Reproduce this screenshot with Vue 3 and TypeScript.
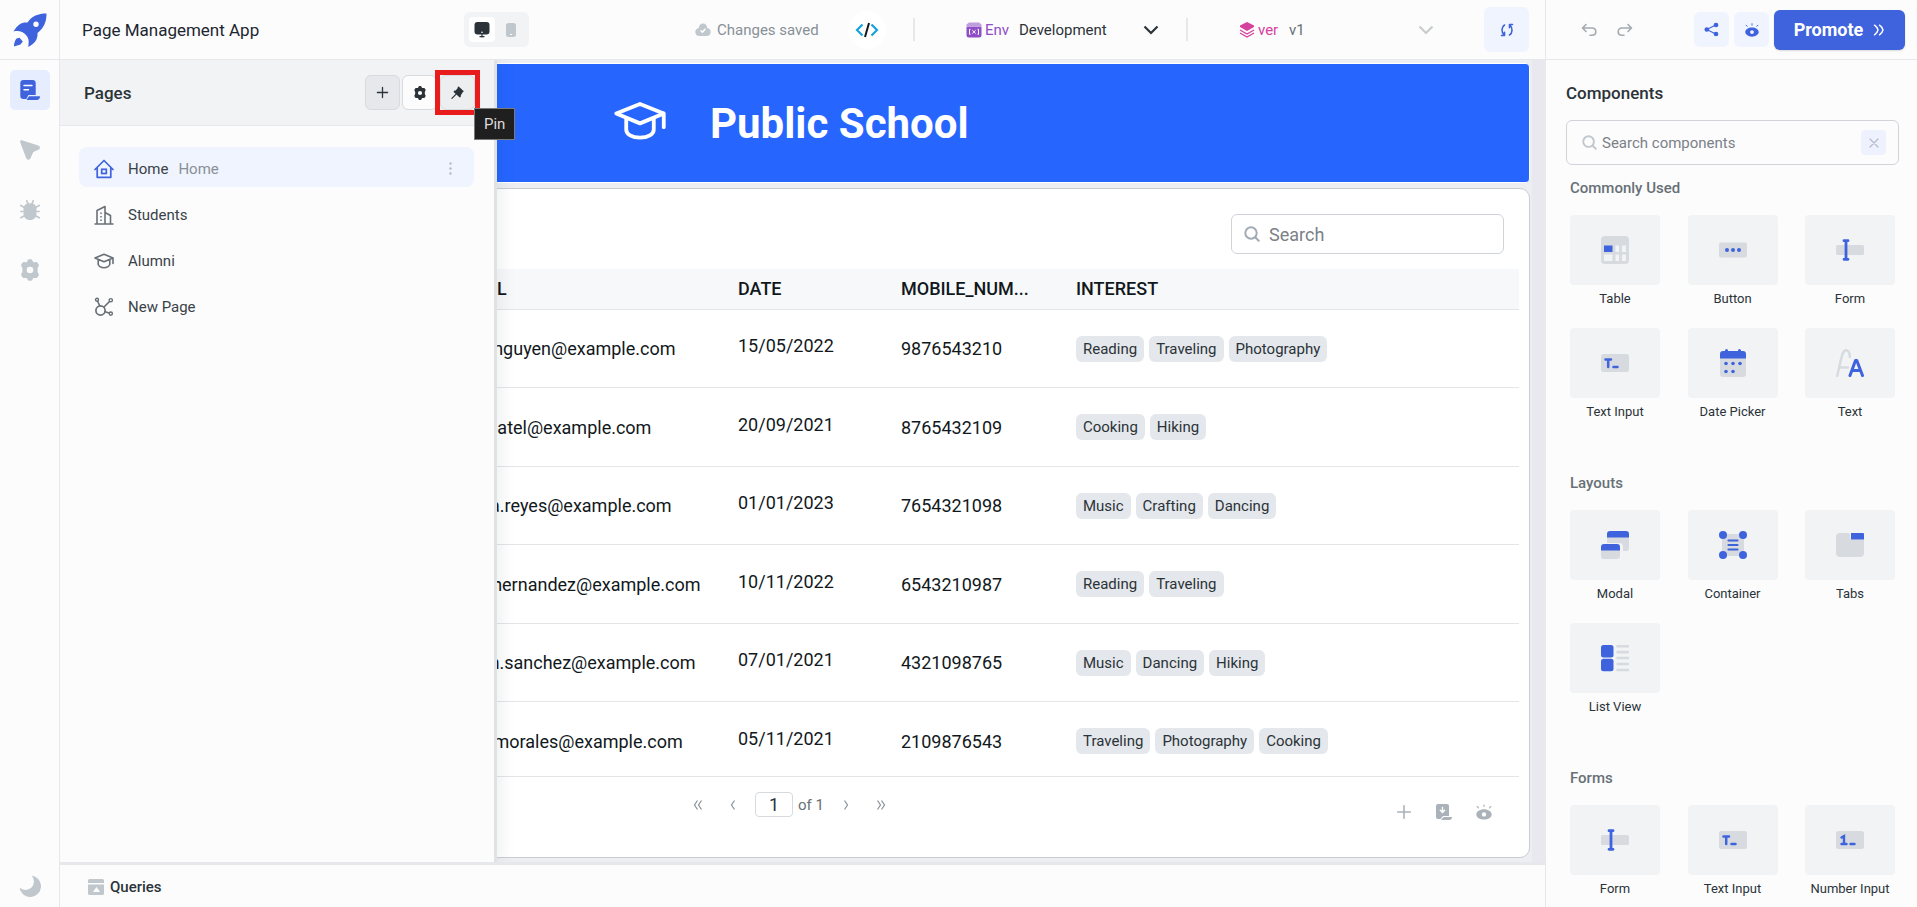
<script setup lang="ts">
import { ref } from 'vue'

interface PageItem { name: string; icon: string; home?: boolean }
interface Student { email: string; date: string; mobile: string; interests: string[] }
interface Widget { name: string; icon: string }
interface WidgetGroup { title: string; items: Widget[] }

const pages: PageItem[] = [
  { name: 'Home', icon: 'i-home', home: true },
  { name: 'Students', icon: 'i-building' },
  { name: 'Alumni', icon: 'i-cap-small' },
  { name: 'New Page', icon: 'i-nodes' },
]

const students: Student[] = [
  { email: 'john.nguyen@example.com', date: '15/05/2022', mobile: '9876543210', interests: ['Reading', 'Traveling', 'Photography'] },
  { email: 'anil.patel@example.com', date: '20/09/2021', mobile: '8765432109', interests: ['Cooking', 'Hiking'] },
  { email: 'maria.reyes@example.com', date: '01/01/2023', mobile: '7654321098', interests: ['Music', 'Crafting', 'Dancing'] },
  { email: 'jose.hernandez@example.com', date: '10/11/2022', mobile: '6543210987', interests: ['Reading', 'Traveling'] },
  { email: 'adam.sanchez@example.com', date: '07/01/2021', mobile: '4321098765', interests: ['Music', 'Dancing', 'Hiking'] },
  { email: 'cara.morales@example.com', date: '05/11/2021', mobile: '2109876543', interests: ['Traveling', 'Photography', 'Cooking'] },
]

const groups: WidgetGroup[] = [
  {
    title: 'Commonly Used',
    items: [
      { name: 'Table', icon: 'w-table' },
      { name: 'Button', icon: 'w-button' },
      { name: 'Form', icon: 'w-form' },
      { name: 'Text Input', icon: 'w-textinput' },
      { name: 'Date Picker', icon: 'w-date' },
      { name: 'Text', icon: 'w-text' },
    ],
  },
  {
    title: 'Layouts',
    items: [
      { name: 'Modal', icon: 'w-modal' },
      { name: 'Container', icon: 'w-container' },
      { name: 'Tabs', icon: 'w-tabs' },
      { name: 'List View', icon: 'w-list' },
    ],
  },
  {
    title: 'Forms',
    items: [
      { name: 'Form', icon: 'w-form' },
      { name: 'Text Input', icon: 'w-textinput' },
      { name: 'Number Input', icon: 'w-number' },
    ],
  },
]

const activePage = ref('Home')
const pageNumber = ref('1')
const tableSearch = ref('')
const widgetSearch = ref('')
</script>

<template>
  <div class="app">
    <svg class="sprite" aria-hidden="true">
      <symbol id="i-rocket" viewBox="0 0 34 34">
        <path fill="currentColor" fill-rule="evenodd" d="M33.500 .5C25 .5 19 3 14.500 9.500 9 9 5 11 0.500 18.500c3-.6 6-.6 8.500.5 3 1.500 5.500 4 6.300 7 .8 2.500.2 5 0 8C21 31 25 27 24.500 20 31 15 33.500 9 33.500.5ZM23 8.500a2.700 2.700 0 1 1 0 5.400 2.700 2.700 0 0 1 0-5.400Z" />
        <path fill="currentColor" d="M3.500 25.500 6.500 24.800 9.800 28.500 7.500 31.500 1 33.500C1 30 2 27.500 3.500 25.500Z" />
      </symbol>
      <symbol id="i-page" viewBox="0 0 20 20">
        <path fill="currentColor" d="M3.500 0h9A3.200 3.200 0 0 1 15.700 3.200V15H8.500L6.300 19H3.500A3.200 3.200 0 0 1 .3 15.800V3.200A3.200 3.200 0 0 1 3.500 0ZM9 16.200h11c0 2.500-1.200 3.800-3.500 3.800H6.500Z" />
        <path stroke="#fff" stroke-width="1.400" stroke-linecap="round" d="M4 5.500h8M4 9.700h4.500" />
      </symbol>
      <symbol id="i-cursor" viewBox="0 0 20 20">
        <path fill="currentColor" d="M1.800.2 18.300 5.500c2.200.8 2.200 3.200.2 4.200l-5.200 2.300-2.800 6.300c-.9 2-3.700 2-4.400-.2L.2 2.300C-.2.900.6-.1 1.800.2Z" />
      </symbol>
      <symbol id="i-bug" viewBox="0 0 20 20">
        <path fill="currentColor" d="M3.500 8C4 4.500 7 3.200 10 3.200s6 1.300 6.500 4.800v5.500c0 4-2.500 6.500-6.500 6.500s-6.500-2.500-6.500-6.500Z" />
        <path fill="none" stroke="currentColor" stroke-width="1.700" stroke-linecap="round" d="M6.800.8 8 4M13.200.8 12 4M.8 5.500 4.500 7.500M19.200 5.500 15.500 7.500M.8 11.500H5M19.200 11.500H15M.8 17.800 5 15.500M19.200 17.800 15 15.500" />
      </symbol>
      <symbol id="i-gear" viewBox="0 0 20 20">
        <path fill="currentColor" fill-rule="evenodd" d="M8.300.5C9 0 11 0 11.700.5l1.300 2.400 2.900-.1c.9.300 2.300 2.300 2.200 3.200L16.900 8.500v3l1.200 2.500c0 .9-1.300 2.900-2.200 3.300l-2.900-.1-1.300 2.300c-.7.500-2.700.5-3.400 0L7 17.200l-2.900.1c-.9-.4-2.200-2.400-2.200-3.300l1.200-2.500v-3L1.900 6c0-.9 1.300-2.900 2.200-3.200l2.900.1ZM10 7a3 3 0 1 0 0 6 3 3 0 0 0 0-6Z" />
      </symbol>
      <symbol id="i-moon" viewBox="0 0 22 22">
        <path fill="currentColor" d="M12.500.5A10.800 10.800 0 1 1 .5 12.500 8 8 0 0 0 12.500.5Z" />
      </symbol>
      <symbol id="i-desktop" viewBox="0 0 16 16">
        <rect fill="currentColor" x=".5" y="0" width="15" height="12.500" rx="3" />
        <path stroke="currentColor" stroke-width="1.200" d="M8 12v3.500M5.500 14.700h5" />
        <circle fill="#fff" cx="8" cy="10.300" r=".8" />
      </symbol>
      <symbol id="i-phone" viewBox="0 0 10 14">
        <rect fill="currentColor" width="10" height="14" rx="2.500" />
        <path stroke="#fff" stroke-width="1" d="M4 11.500h2" />
      </symbol>
      <symbol id="i-cloud" viewBox="0 0 16 14">
        <path fill="currentColor" d="M3.800 5C4 2 5.500.5 8 .5S12 2 12.200 5C14.500 5.500 15.700 7 15.700 9c0 2.500-1.700 4-4.200 4h-7C2 13 .3 11.500.3 9c0-2 1.200-3.500 3.500-4Z" />
        <path fill="none" stroke="#fff" stroke-width="1.500" stroke-linecap="round" stroke-linejoin="round" d="M6 7.800 7.400 9.200 10 6.300" />
      </symbol>
      <symbol id="i-code" viewBox="0 0 24 16">
        <path fill="none" stroke="#17a2dc" stroke-width="2.200" d="M7.500 2.500 2 8l5.500 5.500M16.500 2.500 22 8l-5.500 5.500" />
        <path stroke="#11181c" stroke-width="2" d="M14 1 10 15" />
      </symbol>
      <symbol id="i-env" viewBox="0 0 16 16">
        <path fill="currentColor" d="M.5 4.500h15V13a2.500 2.500 0 0 1-2.500 2.500H3A2.500 2.500 0 0 1 .5 13Z" />
        <path fill="currentColor" opacity=".55" d="M3 .5h10L15.500 2.500V4H.5V2.500Z" />
        <path fill="none" stroke="#fff" stroke-width="1" d="M4.500 7.300H3.500v5h1M11.500 7.300h1v5h-1M6.300 8.200l3.400 3.300M9.700 8.200l-3.400 3.300" />
      </symbol>
      <symbol id="i-layers" viewBox="0 0 16 16">
        <path fill="currentColor" d="M8 0 15 3.500V5L8 9 1 5V3.500Z" />
        <path fill="none" stroke="currentColor" stroke-width="1.300" d="M1 8l7 4 7-4M1 11l7 4 7-4" />
      </symbol>
      <symbol id="i-chevron" viewBox="0 0 16 10">
        <path fill="none" stroke="currentColor" stroke-width="2.200" d="M1.500 1.500 8 8l6.500-6.500" />
      </symbol>
      <symbol id="i-refresh" viewBox="0 0 14 14">
        <path fill="none" stroke="currentColor" stroke-width="1.600" stroke-linecap="round" stroke-linejoin="round" d="M4.500 2C1.300 4 1.200 9 4 12M4.500 9.300V12.500H1.500M9.500 12c3.200-2 3.300-7 .5-10M9.500 4.700V1.500h3" />
      </symbol>
      <symbol id="i-undo" viewBox="0 0 16 14">
        <path fill="none" stroke="currentColor" stroke-width="1.600" stroke-linecap="round" stroke-linejoin="round" d="M5 1.500 1.500 5 5 8.500M1.500 5H11c2.300 0 3.800 1.500 3.800 3.800S13.300 12.300 11 12.300H9" />
      </symbol>
      <symbol id="i-redo" viewBox="0 0 16 14">
        <path fill="none" stroke="currentColor" stroke-width="1.600" stroke-linecap="round" stroke-linejoin="round" d="M11 1.500 14.500 5 11 8.500M14.500 5H5C2.700 5 1.200 6.500 1.200 8.800S2.700 12.300 5 12.300H7" />
      </symbol>
      <symbol id="i-share" viewBox="0 0 16 16">
        <path stroke="currentColor" stroke-width="1.200" d="M3 8 13 3M3 8l10 5" />
        <circle fill="currentColor" cx="3" cy="8" r="2.500" /><circle fill="currentColor" cx="12.800" cy="3.200" r="2.500" /><circle fill="currentColor" cx="12.800" cy="12.800" r="2.500" />
      </symbol>
      <symbol id="i-eye" viewBox="0 0 16 16">
        <path fill="currentColor" fill-rule="evenodd" d="M8 5.200c4 0 7.700 2.300 7.700 5.200S12 15.600 8 15.600.3 13.300.3 10.400 4 5.200 8 5.200Zm0 3a2.200 2.200 0 1 0 0 4.400 2.200 2.200 0 0 0 0-4.400Z" />
        <path stroke="currentColor" stroke-width="1.100" stroke-linecap="round" d="M8 .7v1.800M1.200 2.500l1.300 1.300M14.800 2.500l-1.300 1.300" />
      </symbol>
      <symbol id="i-forward" viewBox="0 0 12 12">
        <path fill="none" stroke="currentColor" stroke-width="1.400" stroke-linecap="round" stroke-linejoin="round" d="M1.500 1.200C3.500 2.500 4.500 4 5 6c-.5 2-1.500 3.500-3.500 4.800M6.500 1.200C8.500 2.500 9.500 4 10 6c-.5 2-1.500 3.500-3.500 4.800" />
      </symbol>
      <symbol id="i-search" viewBox="0 0 16 16">
        <circle fill="none" stroke="currentColor" stroke-width="2" cx="7" cy="7" r="5.700" />
        <path stroke="currentColor" stroke-width="2" stroke-linecap="round" d="M11.500 11.500 14.700 14.700" />
      </symbol>
      <symbol id="i-close" viewBox="0 0 10 10">
        <path stroke="currentColor" stroke-width="1.200" stroke-linecap="round" d="M1 1l8 8M9 1 1 9" />
      </symbol>
      <symbol id="i-plus" viewBox="0 0 14 14">
        <path stroke="currentColor" stroke-width="1.400" stroke-linecap="round" d="M7 1.500v11M1.500 7h11" />
      </symbol>
      <symbol id="i-pin" viewBox="0 0 14 14">
        <path fill="currentColor" d="M8.300.5 13.500 5.500c.3.700-.2 1.300-.9 1.300l-2 3.200c.2 1.200-.2 2.300-1.200 2.500L2.800 6.500c-.1-1 .8-1.800 2.200-1.600l2.300-2.800C7 1.200 7.500.3 8.300.5Z" />
        <path stroke="currentColor" stroke-width="1.300" stroke-linecap="round" d="M5.500 8.800 1 13.300" />
      </symbol>
      <symbol id="i-home" viewBox="0 0 20 20">
        <path fill="none" stroke="currentColor" stroke-width="1.700" stroke-linecap="round" stroke-linejoin="round" d="M1 10.500 10 1.500l9 9M3.200 9v9.300h13.600V9" />
        <rect fill="none" stroke="currentColor" stroke-width="1.700" x="7.700" y="10.300" width="4.600" height="4.200" />
      </symbol>
      <symbol id="i-building" viewBox="0 0 20 20">
        <path fill="none" stroke="currentColor" stroke-width="1.600" stroke-linecap="round" stroke-linejoin="round" d="M1 19h18M3 19V5.500L11 1.500V19M11 7.500l5.500 3V19" />
        <path stroke="currentColor" stroke-width="1.500" stroke-dasharray="1.500 2" d="M7 7.500V18" />
      </symbol>
      <symbol id="i-cap-small" viewBox="0 0 20 16">
        <path fill="none" stroke="currentColor" stroke-width="1.600" stroke-linecap="round" stroke-linejoin="round" d="M19 5 10 1.200 1 5l9 3.800L19 5v5.500M4.200 7v4.500c1 2.200 3 3.200 5.800 3.200s4.800-1 5.800-3.200V7" />
      </symbol>
      <symbol id="i-nodes" viewBox="0 0 20 20">
        <path fill="none" stroke="currentColor" stroke-width="1.600" d="M5.800 9 3.500 4M9.500 10.500 15.500 4.500M10.500 14.500 15 16" />
        <circle fill="none" stroke="currentColor" stroke-width="1.700" cx="6.500" cy="13.500" r="4.600" />
        <circle fill="none" stroke="currentColor" stroke-width="1.400" cx="3" cy="2.800" r="1.500" />
        <circle fill="none" stroke="currentColor" stroke-width="1.400" cx="16.800" cy="3.200" r="1.600" />
        <circle fill="none" stroke="currentColor" stroke-width="1.400" cx="16.800" cy="16.600" r="1.600" />
      </symbol>
      <symbol id="i-cap" viewBox="0 0 54 40">
        <path fill="none" stroke="currentColor" stroke-width="4" stroke-linecap="round" stroke-linejoin="round" d="M52 12 27 2 2 12l25 10.500L52 12v14.500M12.500 17v12c0 5 6 8.500 14.500 8.500S41.500 34 41.500 29V17" />
      </symbol>
      <symbol id="i-first" viewBox="0 0 10 10">
        <path fill="none" stroke="currentColor" stroke-width="1.200" d="M4.500 .5 1.500 5l3 4.500M8.500 .5l-3 4.500 3 4.500" />
      </symbol>
      <symbol id="i-last" viewBox="0 0 10 10">
        <path fill="none" stroke="currentColor" stroke-width="1.200" d="M1.500 .5l3 4.500-3 4.500M5.500 .5l3 4.500-3 4.500" />
      </symbol>
      <symbol id="i-prev" viewBox="0 0 10 10">
        <path fill="none" stroke="currentColor" stroke-width="1.200" d="M6.500 .5l-3 4.500 3 4.500" />
      </symbol>
      <symbol id="i-next" viewBox="0 0 10 10">
        <path fill="none" stroke="currentColor" stroke-width="1.200" d="M3.500 .5l3 4.500-3 4.500" />
      </symbol>
      <symbol id="i-download" viewBox="0 0 16 16">
        <path fill="currentColor" d="M2 0h9a2 2 0 0 1 2 2v10H7L4.500 15H2a2 2 0 0 1-2-2V2a2 2 0 0 1 2-2ZM7.500 13H16c0 2-1 3-2.800 3H5Z" />
        <path fill="none" stroke="#fff" stroke-width="1.400" stroke-linecap="round" stroke-linejoin="round" d="M6.500 3.500v4.800M4.300 6.300l2.200 2.200 2.200-2.200" />
      </symbol>
      <symbol id="i-queries" viewBox="0 0 16 16">
        <path fill="currentColor" d="M1.500 0h13A1.500 1.500 0 0 1 16 1.500V4H0V1.500A1.500 1.500 0 0 1 1.500 0ZM0 5.500h16v9a1.500 1.500 0 0 1-1.500 1.500h-13A1.500 1.500 0 0 1 0 14.500Z" />
        <path fill="#fff" d="M8.500 8 12 13H5Z" />
      </symbol>

      <symbol id="w-table" viewBox="0 0 28 28">
        <rect fill="#d7dbdf" width="28" height="28" rx="4" />
        <rect fill="#3e63dd" x="3" y="9.500" width="8.500" height="6.500" />
        <path fill="#f1f3f5" d="M14.500 9.500H18V16h-3.500ZM21 9.500h4V16h-4ZM3 18.500h8.500V25H3ZM14.500 18.500H18V25h-3.500ZM21 18.500h4V25h-4Z" />
      </symbol>
      <symbol id="w-button" viewBox="0 0 28 28">
        <rect fill="#d7dbdf" y="6.500" width="28" height="15" rx="2" />
        <circle fill="#3e63dd" cx="8" cy="14" r="2" /><circle fill="#3e63dd" cx="14" cy="14" r="2" /><circle fill="#3e63dd" cx="20" cy="14" r="2" />
      </symbol>
      <symbol id="w-form" viewBox="0 0 28 28">
        <rect fill="#d7dbdf" y="9" width="28" height="10" rx="1.500" />
        <path stroke="#3e63dd" stroke-width="2.800" stroke-linecap="round" d="M10 5v18M8 4.700h4M8 23.300h4" />
      </symbol>
      <symbol id="w-textinput" viewBox="0 0 28 28">
        <rect fill="#d7dbdf" y="5" width="28" height="18" rx="2.500" />
        <path fill="none" stroke="#3e63dd" stroke-width="2.500" stroke-linecap="round" d="M4.500 10.500h5.500M7.200 10.500V18M12.500 18h4" />
      </symbol>
      <symbol id="w-number" viewBox="0 0 28 28">
        <rect fill="#d7dbdf" y="5" width="28" height="18" rx="2.500" />
        <path fill="none" stroke="#3e63dd" stroke-width="2.400" stroke-linecap="round" d="M5.500 11.500 8 10v8M5.500 18h5M14.500 18h4" />
      </symbol>
      <symbol id="w-date" viewBox="0 0 28 28">
        <path fill="#d7dbdf" d="M1 8h26v17a3 3 0 0 1-3 3H4a3 3 0 0 1-3-3Z" />
        <path fill="#3e63dd" d="M4 2h2V1.500a1.500 1.500 0 0 1 3 0V2h10v-.5a1.500 1.500 0 0 1 3 0V2h2a3 3 0 0 1 3 3v4.500H1V5a3 3 0 0 1 3-3Z" />
        <circle fill="#3e63dd" cx="7" cy="14.500" r="1.800" /><circle fill="#3e63dd" cx="14" cy="14.500" r="1.800" /><circle fill="#3e63dd" cx="21" cy="14.500" r="1.800" />
        <circle fill="#3e63dd" cx="7" cy="22.500" r="1.800" /><circle fill="#3e63dd" cx="14" cy="22.500" r="1.800" />
      </symbol>
      <symbol id="w-text" viewBox="0 0 28 28">
        <path fill="none" stroke="#d7dbdf" stroke-width="2.400" stroke-linecap="round" d="M1.200 27C3.500 18 5 7 7.500 3 9.500-.2 14 1 13.800 8M4 18.500h8" />
        <path fill="none" stroke="#3e63dd" stroke-width="3" stroke-linecap="round" stroke-linejoin="round" d="M14 26.500 19.500 11.500h1.300L26.500 26.500M16 21.500h8.500" />
      </symbol>
      <symbol id="w-modal" viewBox="0 0 28 28">
        <path fill="#d7dbdf" d="M6 5h22v12a3 3 0 0 1-3 3h-3v-4a4 4 0 0 0-4-4H6Z" />
        <path fill="#3e63dd" d="M6 6.500V3a3 3 0 0 1 3-3h16a3 3 0 0 1 3 3v3.500Z" />
        <path fill="#d7dbdf" d="M0 18h19v7a3 3 0 0 1-3 3H3a3 3 0 0 1-3-3Z" />
        <path fill="#3e63dd" d="M0 19.500V16a3 3 0 0 1 3-3h13a3 3 0 0 1 3 3v3.500Z" />
      </symbol>
      <symbol id="w-container" viewBox="0 0 28 28">
        <rect fill="#d7dbdf" x="3" y="3" width="22" height="22" rx="1" />
        <circle fill="#3e63dd" cx="4" cy="4" r="4" /><circle fill="#3e63dd" cx="24" cy="4" r="4" /><circle fill="#3e63dd" cx="4" cy="24" r="4" /><circle fill="#3e63dd" cx="24" cy="24" r="4" />
        <path stroke="#3e63dd" stroke-width="2.200" stroke-linecap="round" d="M9.500 9.500h9M9.500 14h9M9.500 18.500h9" />
      </symbol>
      <symbol id="w-tabs" viewBox="0 0 28 28">
        <path fill="#d7dbdf" d="M4 2h8a2 2 0 0 1 2 2v3a1.500 1.500 0 0 0 1.500 1.500H28V22a4 4 0 0 1-4 4H4a4 4 0 0 1-4-4V6a4 4 0 0 1 4-4Z" />
        <path fill="#3e63dd" d="M15 2h12a1 1 0 0 1 1 1v5.500H15Z" />
      </symbol>
      <symbol id="w-list" viewBox="0 0 28 28">
        <rect fill="#3e63dd" y="1" width="12.500" height="12.500" rx="2.500" /><rect fill="#3e63dd" y="14.800" width="12.500" height="12.500" rx="2.500" />
        <path stroke="#d7dbdf" stroke-width="2.600" stroke-linecap="round" d="M16.500 2.200H27M16.500 8.100H27M16.500 14H27M16.500 20H27M16.500 26H27" />
      </symbol>
    </svg>

    <header class="topbar">
      <a class="logo" href="#" aria-label="Dashboard"><svg width="34" height="34"><use href="#i-rocket" /></svg></a>
      <div class="top-main">
        <h1 class="app-name">Page Management App</h1>
        <div class="device">
          <button class="dev on" aria-label="Desktop"><svg width="16" height="16"><use href="#i-desktop" /></svg></button>
          <button class="dev" aria-label="Mobile"><svg width="10" height="14"><use href="#i-phone" /></svg></button>
        </div>
        <div class="saved"><svg width="16" height="14"><use href="#i-cloud" /></svg><span>Changes saved</span></div>
        <button class="code" aria-label="Code"><svg width="24" height="16"><use href="#i-code" /></svg></button>
        <span class="rule"></span>
        <label class="tag env" for="env"><svg width="16" height="16"><use href="#i-env" /></svg>Env</label>
        <div class="pick">
          <select id="env"><option>Development</option></select>
          <svg width="16" height="10"><use href="#i-chevron" /></svg>
        </div>
        <span class="rule"></span>
        <label class="tag ver" for="ver"><svg width="16" height="16"><use href="#i-layers" /></svg>ver</label>
        <div class="pick muted">
          <select id="ver"><option>v1</option></select>
          <svg width="16" height="10"><use href="#i-chevron" /></svg>
        </div>
        <button class="sync" aria-label="Sync"><svg width="14" height="14"><use href="#i-refresh" /></svg></button>
      </div>
      <div class="top-right">
        <button class="plain" aria-label="Undo"><svg width="16" height="14"><use href="#i-undo" /></svg></button>
        <button class="plain" aria-label="Redo"><svg width="16" height="14"><use href="#i-redo" /></svg></button>
        <button class="soft first" aria-label="Share"><svg width="15" height="15"><use href="#i-share" /></svg></button>
        <button class="soft" aria-label="Preview"><svg width="14" height="14"><use href="#i-eye" /></svg></button>
        <button class="promote">Promote<svg width="12" height="12"><use href="#i-forward" /></svg></button>
      </div>
    </header>

    <nav class="rail">
      <button class="rail-btn on" aria-label="Pages"><svg width="20" height="20"><use href="#i-page" /></svg></button>
      <button class="rail-btn" aria-label="Inspector"><svg width="20" height="20"><use href="#i-cursor" /></svg></button>
      <button class="rail-btn" aria-label="Debugger"><svg width="20" height="20"><use href="#i-bug" /></svg></button>
      <button class="rail-btn" aria-label="Settings"><svg width="22" height="22"><use href="#i-gear" /></svg></button>
      <button class="rail-btn last" aria-label="Dark mode"><svg width="22" height="22"><use href="#i-moon" /></svg></button>
    </nav>

    <section class="stage">
      <div class="work">
        <div class="canvas">
          <div class="banner">
            <svg width="52" height="38"><use href="#i-cap" /></svg>
            <h2>Public School</h2>
          </div>
          <div class="card">
            <div class="card-top">
              <label class="find">
                <svg width="16" height="16"><use href="#i-search" /></svg>
                <input v-model="tableSearch" type="text" placeholder="Search" aria-label="Search table" />
              </label>
            </div>
            <div class="grid-wrap">
              <table>
                <colgroup><col class="c-email" /><col class="c-date" /><col class="c-mobile" /><col /></colgroup>
                <thead>
                  <tr><th class="email">EMAIL</th><th>DATE</th><th>MOBILE_NUM...</th><th>INTEREST</th></tr>
                </thead>
                <tbody>
                  <tr v-for="s in students" :key="s.email">
                    <td class="email">{{ s.email }}</td>
                    <td class="date">{{ s.date }}</td>
                    <td>{{ s.mobile }}</td>
                    <td><div class="chips"><span v-for="t in s.interests" :key="t" class="chip">{{ t }}</span></div></td>
                  </tr>
                </tbody>
              </table>
            </div>
            <div class="card-foot">
              <div class="pager">
                <button aria-label="First page"><svg width="10" height="10"><use href="#i-first" /></svg></button>
                <button aria-label="Previous page"><svg width="10" height="10"><use href="#i-prev" /></svg></button>
                <span class="count"><input v-model="pageNumber" type="text" aria-label="Page number" /><span>of 1</span></span>
                <button aria-label="Next page"><svg width="10" height="10"><use href="#i-next" /></svg></button>
                <button aria-label="Last page"><svg width="10" height="10"><use href="#i-last" /></svg></button>
              </div>
              <div class="acts">
                <button aria-label="Add row"><svg width="16" height="16"><use href="#i-plus" /></svg></button>
                <button aria-label="Download"><svg width="16" height="16"><use href="#i-download" /></svg></button>
                <button aria-label="Columns"><svg width="16" height="16"><use href="#i-eye" /></svg></button>
              </div>
            </div>
          </div>
        </div>

        <aside class="pages">
          <header class="pages-head">
            <h2>Pages</h2>
            <div class="pages-tools">
              <button class="tool add" aria-label="Add page"><svg width="13" height="13"><use href="#i-plus" /></svg></button>
              <button class="tool" aria-label="Page settings"><svg width="14" height="14"><use href="#i-gear" /></svg></button>
              <div class="pin-wrap">
                <button class="tool pin" aria-label="Pin" aria-describedby="pin-tip"><svg width="13" height="13"><use href="#i-pin" /></svg></button>
                <span class="mark"></span>
                <span id="pin-tip" class="tip" role="tooltip">Pin</span>
              </div>
            </div>
          </header>
          <ul class="page-list">
            <li v-for="p in pages" :key="p.name">
              <button class="page" :class="{ on: p.name === activePage }" @click="activePage = p.name">
                <svg class="page-icon" width="20" height="20"><use :href="'#' + p.icon" /></svg>
                <span>{{ p.name }}</span>
                <span v-if="p.home" class="badge">Home</span>
                <svg v-if="p.name === activePage" class="dots" width="3" height="13" viewBox="0 0 3 13"><circle cx="1.500" cy="1.500" r="1.200" /><circle cx="1.500" cy="6.500" r="1.200" /><circle cx="1.500" cy="11.500" r="1.200" /></svg>
              </button>
            </li>
          </ul>
        </aside>
      </div>
      <footer class="queries">
        <button><svg width="16" height="16"><use href="#i-queries" /></svg>Queries</button>
      </footer>
    </section>

    <aside class="library">
      <h2>Components</h2>
      <label class="lib-search">
        <svg width="15" height="15"><use href="#i-search" /></svg>
        <input v-model="widgetSearch" type="text" placeholder="Search components" aria-label="Search components" />
        <button aria-label="Clear" @click="widgetSearch = ''"><svg width="10" height="10"><use href="#i-close" /></svg></button>
      </label>
      <section v-for="g in groups" :key="g.title" class="group">
        <h3>{{ g.title }}</h3>
        <div class="tiles">
          <button v-for="w in g.items" :key="w.name" class="widget">
            <span class="tile"><svg width="28" height="28"><use :href="'#' + w.icon" /></svg></span>
            <span>{{ w.name }}</span>
          </button>
        </div>
      </section>
    </aside>
  </div>
</template>

<style>
body { margin: 0; }
</style>

<style scoped>
* { box-sizing: border-box; }
.app {
  display: grid;
  grid-template: 60px minmax(0, 1fr) / 60px minmax(0, 1fr) 372px;
  height: 100vh;
  overflow: hidden;
  background: #fcfcfd;
  color: #11181c;
  font-family: Roboto, "IBM Plex Sans", sans-serif;
  font-size: 15px;
}
.sprite { position: absolute; width: 0; height: 0; }
svg { display: block; flex: none; }
h1, h2, h3, ul { margin: 0; padding: 0; list-style: none; }
button {
  display: flex;
  align-items: center;
  justify-content: center;
  padding: 0;
  border: 0;
  background: none;
  color: inherit;
  font: inherit;
}
input, select { border: 0; outline: 0; padding: 0; background: none; font: inherit; color: inherit; }

.topbar { grid-column: 1 / -1; display: flex; border-bottom: 1px solid #e6e8eb; }
.logo { display: grid; place-items: center; width: 60px; border-right: 1px solid #e6e8eb; color: #3e63dd; }
.top-main { flex: 1; display: flex; align-items: center; padding: 0 16px 0 22px; }
.app-name { width: 382px; font-size: 17px; font-weight: 400; color: #1c2630; }
.device { display: flex; align-items: center; gap: 3px; width: 65px; height: 35px; padding: 0 5px; border-radius: 6px; background: #f1f3f5; }
.dev { width: 27px; height: 25px; border-radius: 4px; color: #c1c8cd; }
.dev.on { background: #fff; color: #2b3338; }
.saved { display: flex; align-items: center; gap: 6px; width: 153px; margin-left: auto; color: #889096; }
.saved svg { color: #c1c8cd; }
.code { width: 38px; height: 38px; border-radius: 50%; background: #fff; }
.rule { width: 2px; height: 23px; margin: 0 51px 0 27px; background: #e6e8eb; }
.tag { display: flex; align-items: center; gap: 3px; width: 53px; }
.env { color: #8e4ec6; }
.ver { width: 50px; color: #d6409f; }
.pick { display: flex; align-items: center; width: 140px; color: #2b3338; }
.pick select { flex: 1; appearance: none; margin-right: -16px; padding-right: 16px; }
.pick svg { pointer-events: none; }
.pick.muted { width: 145px; color: #687076; }
.pick.muted svg { color: #c8cccf; }
.sync { width: 45px; height: 45px; margin-left: 50px; border-radius: 6px; background: #f0f4ff; color: #3e63dd; }
.top-right { display: flex; align-items: center; width: 372px; padding: 0 12px 0 35px; border-left: 1px solid #e6e8eb; }
.plain { width: 16px; margin-right: 20px; color: #a3abb1; }
.soft { width: 35px; height: 35px; margin-right: 5px; border-radius: 6px; background: #f0f4ff; color: #3e63dd; }
.soft.first { margin-left: auto; }
.promote { gap: 10px; width: 131px; height: 40px; border-radius: 6px; background: #3e63dd; color: #fff; font-size: 18px; font-weight: 700; box-shadow: 0 1px 2px #0002; }

.rail { display: flex; flex-direction: column; align-items: center; gap: 20px; padding: 10px 0 1px; border-right: 1px solid #e6e8eb; }
.rail-btn { width: 40px; height: 40px; border-radius: 5px; color: #c1c8cd; }
.rail-btn.on { background: #e6edfe; color: #3e63dd; }
.rail-btn.last { margin-top: auto; }

.stage { display: flex; flex-direction: column; min-width: 0; }
.work { position: relative; flex: 1; min-height: 0; overflow: hidden; padding-right: 13px; background: #e9e8ee; }
.canvas { display: flex; flex-direction: column; gap: 5px; height: 100%; padding: 3px 2px 4px; background: #eceef2; }
.banner { display: flex; align-items: center; gap: 44px; height: 120px; padding: 0 0 0 551px; border: 1px solid #fff; border-radius: 4px; background: #2666ff; color: #fff; }
.banner svg { margin-bottom: 5px; }
.banner h2 { font-size: 42px; font-weight: 700; }
.card { flex: 1; display: flex; flex-direction: column; min-height: 0; padding: 0 10px; border: 1px solid #c8cdd2; border-radius: 10px; background: #fff; }
.card-top { display: flex; justify-content: flex-end; padding: 25px 15px 15px; }
.find { display: flex; align-items: center; gap: 9px; width: 273px; height: 40px; padding: 0 12px; border: 1px solid #d0d4d9; border-radius: 6px; color: #a3abb4; font-size: 18px; }
.find input { flex: 1; min-width: 0; color: #11181c; }
input::placeholder { color: #7b8187; opacity: 1; }
.grid-wrap { flex: 1; min-height: 0; overflow: hidden; border-bottom: 1px solid #e3e5e8; }
table { width: 100%; table-layout: fixed; border-collapse: separate; border-spacing: 0; font-size: 18px; }
.c-email { width: 665px; }
.c-date { width: 163px; }
.c-mobile { width: 175px; }
th, td { padding: 0; border-bottom: 1px solid #e3e5e8; text-align: left; white-space: nowrap; }
th { height: 41px; padding-bottom: 2px; background: #f7f8fa; font-weight: 500; }
td { height: 78px; }
tr:nth-child(even) td { height: 79px; }
.email { padding-left: 381px; }
.date { padding-bottom: 6px; }
.chips { display: flex; gap: 5px; }
.chip { padding: 0 7px; border-radius: 6px; background: #e4e7eb; color: #2b3338; font-size: 15px; line-height: 26px; }
.card-foot { display: flex; align-items: flex-start; height: 80px; padding-right: 27px; color: #889096; }
.pager { display: flex; align-items: center; gap: 25px; padding: 15px 0 0 620px; }
.pager button { width: 10px; }
.count { display: flex; align-items: center; gap: 5px; margin: 0 -8px; color: #687076; }
.count input { width: 38px; height: 25px; border: 1px solid #d7dbdf; border-radius: 4px; color: #2b3338; font-size: 18px; text-align: center; }
.acts { display: flex; gap: 24px; margin-left: auto; padding-top: 27px; color: #abb2b9; }

.pages { position: absolute; top: 0; bottom: 0; left: 0; width: 437px; border-right: 3px solid #dfe3e6; background: #fcfcfd; box-shadow: 4px 0 16px #10182812; }
.pages-head { display: flex; align-items: center; justify-content: space-between; height: 66px; padding: 0 19px 0 24px; border-bottom: 1px solid #e6e8eb; background: #f1f3f5; }
.pages-head h2, .library h2 { font-size: 17px; font-weight: 500; color: #2b3338; }
.pages-tools { display: flex; gap: 2px; }
.tool { width: 35px; height: 35px; border: 1px solid #d7dbdf; border-radius: 6px; background: #fcfcfd; color: #2b3338; }
.tool.add { background: #e6e8eb; }
.pin-wrap { position: relative; margin-left: 1px; }
.tool.pin { background: #eceef0; }
.mark { position: absolute; inset: -5px; border: 5px solid #e81c1c; }
.tip { position: absolute; top: 33px; left: 34px; padding: 0 9px; border: 1px solid #7a7a7a; background: #1f1f1f; color: #dcdcdc; line-height: 30px; }
.page-list { display: flex; flex-direction: column; gap: 6px; padding: 21px 20px 0 19px; }
.page { gap: 14px; justify-content: flex-start; width: 100%; height: 40px; padding: 3px 22px 0 15px; border-radius: 8px; color: #3a4248; }
.page.on { background: #f0f4ff; }
.page-icon { color: #687076; }
.page.on .page-icon { color: #3e63dd; }
.badge { margin-left: -4px; color: #889096; }
.dots { margin-left: auto; fill: #b4bbc4; }

.queries { display: flex; align-items: center; height: 45px; padding: 2px 0 0 28px; border-top: 3px solid #e6e8eb; }
.queries button { gap: 6px; color: #2b3338; font-weight: 500; }
.queries svg { color: #c1c8cd; }

.library { overflow: hidden; padding: 20px 18px 0 20px; border-left: 1px solid #e6e8eb; }
.library h2 { height: 40px; line-height: 26px; }
.lib-search { display: flex; align-items: center; gap: 5px; height: 45px; padding: 0 12px 0 15px; border: 1px solid #d0d4d9; border-radius: 6px; color: #c1c8cd; }
.lib-search input { flex: 1; min-width: 0; color: #11181c; }
.lib-search button { width: 25px; height: 25px; border-radius: 4px; background: #eef2ff; color: #b4bbc4; }
.group { padding: 10px 4px 37px; }
.group h3 { height: 40px; font-size: 15px; font-weight: 500; line-height: 26px; color: #687076; }
.tiles { display: grid; grid-template-columns: repeat(3, 90px); justify-content: space-between; row-gap: 18px; }
.widget { flex-direction: column; height: 95px; justify-content: flex-start; gap: 6px; font-size: 13px; line-height: 16px; color: #2b3338; white-space: nowrap; }
.tile { display: grid; place-items: center; width: 90px; height: 70px; border-radius: 4px; background: #f1f3f5; }
</style>
